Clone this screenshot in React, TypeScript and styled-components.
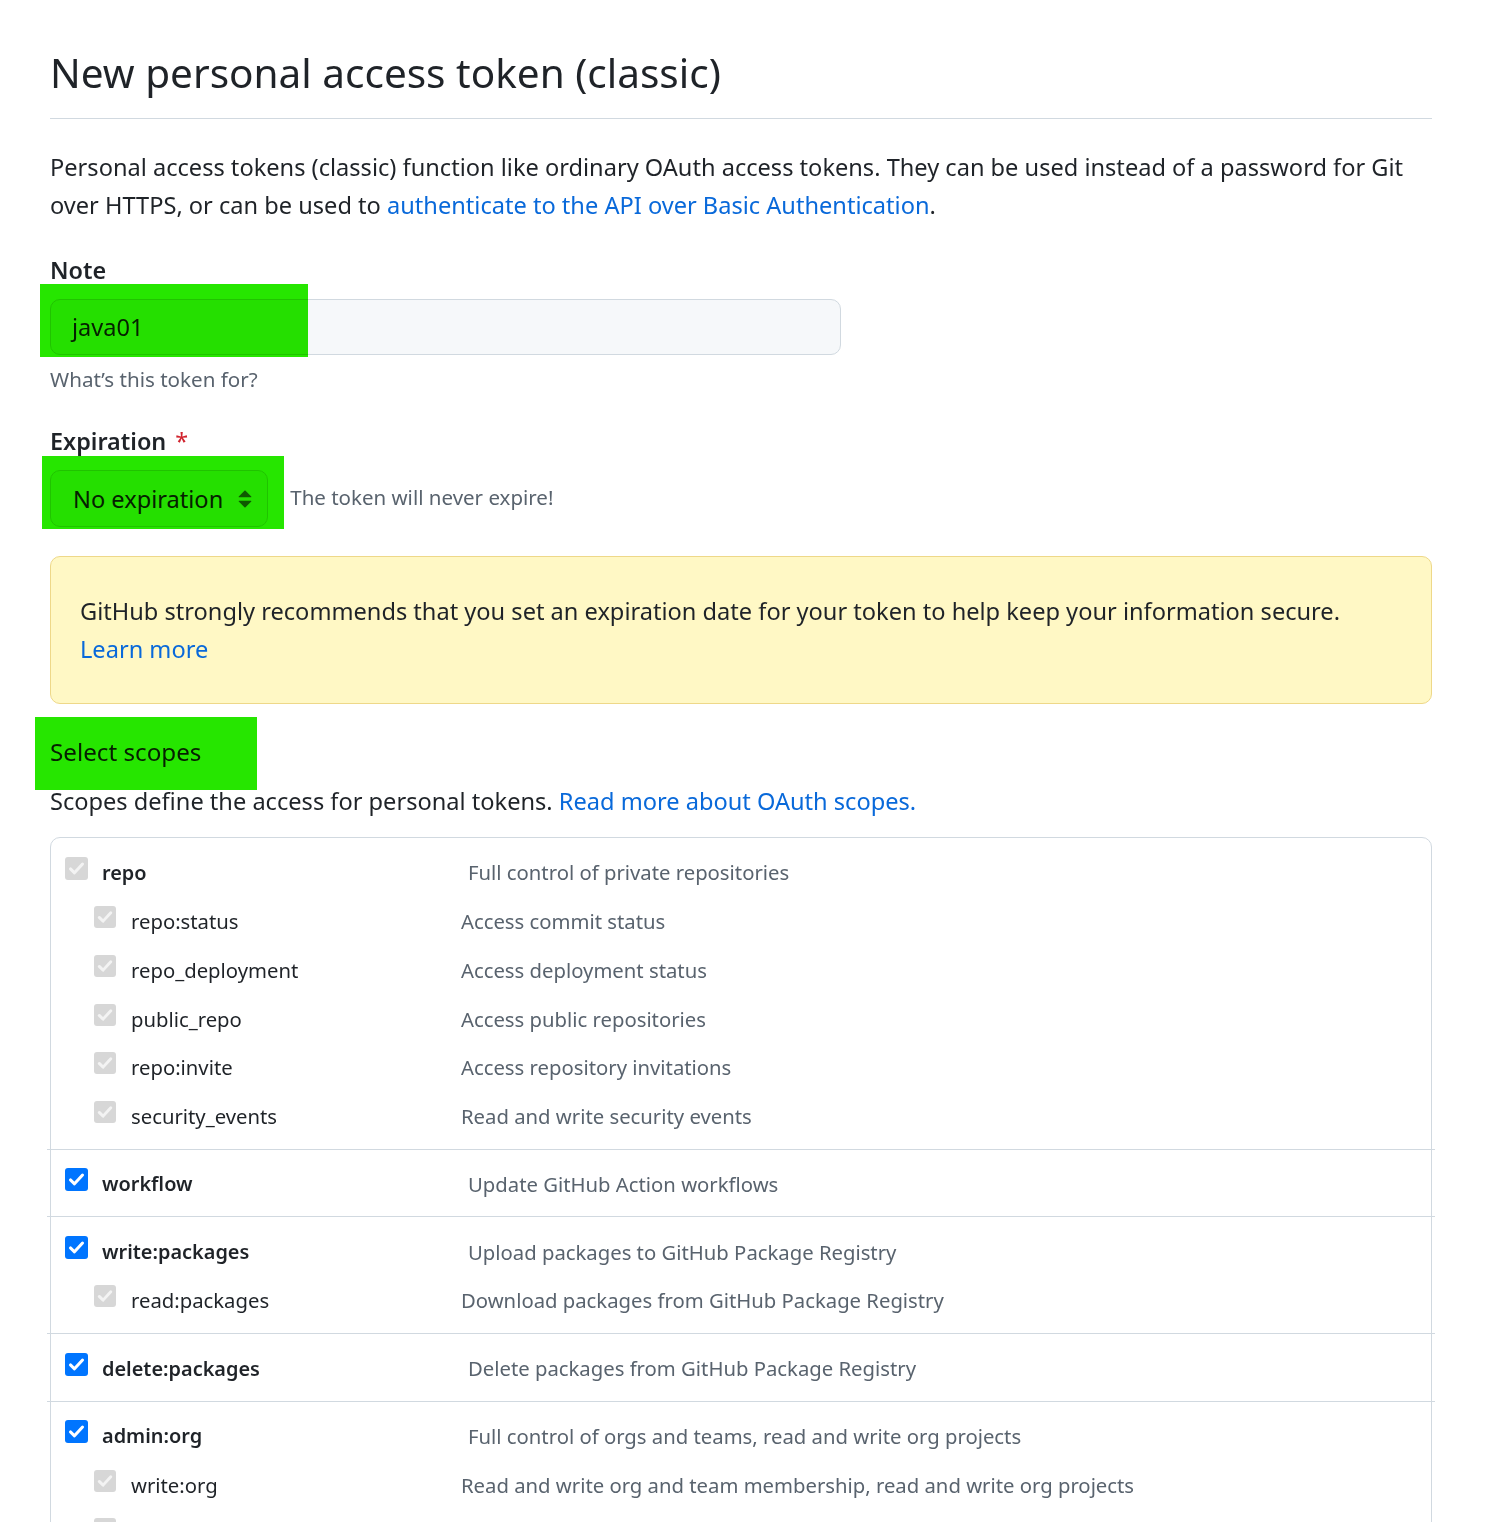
import React from "react";
import styled, { createGlobalStyle } from "styled-components";

const GlobalStyle = createGlobalStyle`
  html, body { margin: 0; padding: 0; background: #ffffff; }
  body {
    font-family: "Noto Sans", "Open Sans", sans-serif;
    color: #1f2328;
    -webkit-font-smoothing: antialiased;
  }
  * { box-sizing: border-box; }
`;

const Page = styled.main`
  box-sizing: content-box;
  width: 1382px;
  padding: 47px 60px 0 50px;
`;

const Title = styled.h1`
  margin: 0;
  padding-bottom: 19px;
  border-bottom: 1px solid #d1d9e0;
  font-size: 40.5px;
  line-height: 52px;
  font-weight: 400;
  color: #1f2328;
`;

const Intro = styled.p`
  margin: 29px 0 0;
  font-size: 23.6px;
  line-height: 38px;
`;

const Link = styled.a`
  color: #0969da;
  text-decoration: none;
`;

const Label = styled.div<{ $top?: number }>`
  margin-top: ${(p) => p.$top ?? 28}px;
  font-size: 23.4px;
  line-height: 36px;
  font-weight: 600;
  display: flex;
  gap: 9px;
`;

const Required = styled.span`
  color: #d1242f;
  font-weight: 400;
`;

const Marked = styled.div`
  position: relative;
  display: inline-flex;
`;

const Highlight = styled.span<{ $l: number; $t: number; $w: number; $h: number }>`
  position: absolute;
  left: ${(p) => p.$l}px;
  top: ${(p) => p.$t}px;
  width: ${(p) => p.$w}px;
  height: ${(p) => p.$h}px;
  background: rgb(38, 230, 0);
  mix-blend-mode: multiply;
  pointer-events: none;
`;

const InputRow = styled.div`
  margin-top: 11px;
`;

const TextInput = styled.div`
  width: 791px;
  height: 56px;
  padding-left: 21px;
  display: flex;
  align-items: center;
  background: #f6f8fa;
  border: 1px solid #d1d9e0;
  border-radius: 10px;
  font-size: 23.6px;
  color: #1f2328;
`;

const Hint = styled.div`
  margin-top: 8px;
  font-size: 20.6px;
  line-height: 32px;
  color: #59636e;
`;

const SelectRow = styled.div`
  margin-top: 11px;
  display: flex;
  align-items: center;
  gap: 22px;
`;

const Select = styled.div`
  height: 57px;
  padding: 0 44px 0 22px;
  display: flex;
  align-items: center;
  position: relative;
  background: #f6f8fa;
  border: 1px solid #d1d9e0;
  border-radius: 10px;
  font-size: 23.6px;
  color: #1f2328;
`;

const SelectArrow = styled.svg`
  position: absolute;
  right: 8px;
  top: 50%;
  margin-top: -14px;
  width: 28px;
  height: 28px;
`;

const SideNote = styled.span`
  font-size: 20.5px;
  color: #59636e;
  margin-top: -3px;
`;

const Flash = styled.div`
  margin-top: 29px;
  padding: 35px 29px;
  background: #fff8c5;
  border: 1px solid #eed889;
  border-radius: 10px;
  font-size: 23.6px;
  line-height: 38px;
`;

const SectionTitle = styled.div`
  margin-top: 30px;
  font-size: 24.2px;
  line-height: 36px;
`;

const SectionText = styled.p`
  margin: 13px 0 0;
  font-size: 23.6px;
  line-height: 36px;
`;

const ScopeBox = styled.div`
  margin-top: 18px;
  border: 1px solid #d1d9e0;
  border-radius: 10px;
  padding-bottom: 40px;
`;

const Group = styled.div<{ $first: boolean }>`
  margin: 0 -4px;
  padding: 9px 4px;
  border-top: ${(p) => (p.$first ? "none" : "1px solid #d1d9e0")};
`;

const Row = styled.div<{ $child: boolean }>`
  height: 48.75px;
  display: flex;
  align-items: center;
  padding-left: ${(p) => (p.$child ? 43 : 14)}px;
  padding-top: 2px;
  font-size: 20.3px;
`;

const Box = styled.span<{ $size: number; $on: boolean; $gap: number }>`
  flex: none;
  width: ${(p) => p.$size}px;
  height: ${(p) => p.$size}px;
  margin: 0 ${(p) => p.$gap}px 8px 0;
  border-radius: 3px;
  background: ${(p) => (p.$on ? "#0075ff" : "#d7d7d7")};
  display: inline-flex;
  align-items: center;
  justify-content: center;
`;

const ScopeName = styled.span<{ $child: boolean }>`
  flex: none;
  width: ${(p) => (p.$child ? 330 : 366)}px;
  font-size: ${(p) => (p.$child ? 20.3 : 19.9)}px;
  font-weight: ${(p) => (p.$child ? 400 : 600)};
  color: #1f2328;
`;

const ScopeDesc = styled.span`
  color: #59636e;
`;

type Scope = { name: string; desc: string };
type ScopeGroup = { parent: Scope; on: boolean; children: Scope[] };

const groups: ScopeGroup[] = [
  {
    parent: { name: "repo", desc: "Full control of private repositories" },
    on: false,
    children: [
      { name: "repo:status", desc: "Access commit status" },
      { name: "repo_deployment", desc: "Access deployment status" },
      { name: "public_repo", desc: "Access public repositories" },
      { name: "repo:invite", desc: "Access repository invitations" },
      { name: "security_events", desc: "Read and write security events" },
    ],
  },
  {
    parent: { name: "workflow", desc: "Update GitHub Action workflows" },
    on: true,
    children: [],
  },
  {
    parent: { name: "write:packages", desc: "Upload packages to GitHub Package Registry" },
    on: true,
    children: [{ name: "read:packages", desc: "Download packages from GitHub Package Registry" }],
  },
  {
    parent: { name: "delete:packages", desc: "Delete packages from GitHub Package Registry" },
    on: true,
    children: [],
  },
  {
    parent: { name: "admin:org", desc: "Full control of orgs and teams, read and write org projects" },
    on: true,
    children: [
      { name: "write:org", desc: "Read and write org and team membership, read and write org projects" },
      { name: "read:org", desc: "Read org and team membership, read org projects" },
      { name: "manage_runners:org", desc: "Manage org runners and runner groups" },
    ],
  },
];

function Check({ size, on, gap }: { size: number; on: boolean; gap: number }) {
  return (
    <Box $size={size} $on={on} $gap={gap}>
      <svg width={size} height={size} viewBox="0 0 16 16">
        <path
          d="M3.8 8.3 L6.6 11 L12.2 4.9"
          fill="none"
          stroke={on ? "#ffffff" : "#f3f3f3"}
          strokeWidth="2.1"
          strokeLinecap="round"
          strokeLinejoin="round"
        />
      </svg>
    </Box>
  );
}

export default function App() {
  return (
    <>
      <GlobalStyle />
      <Page>
        <Title>New personal access token (classic)</Title>
        <Intro>
          Personal access tokens (classic) function like ordinary OAuth access tokens. They can be used instead of a
          password for Git
          <br />
          over HTTPS, or can be used to <Link href="#">authenticate to the API over Basic Authentication</Link>.
        </Intro>

        <Label>Note</Label>
        <InputRow>
          <Marked>
            <TextInput>java01</TextInput>
            <Highlight $l={-10} $t={-15} $w={268} $h={73} />
          </Marked>
        </InputRow>
        <Hint>What’s this token for?</Hint>

        <Label>
          Expiration <Required>*</Required>
        </Label>
        <SelectRow>
          <Marked>
            <Select>
              No expiration
              <SelectArrow viewBox="0 0 16 16" fill="#59636e">
                <path d="M4.427 9.427l3.396 3.396a.25.25 0 00.354 0l3.396-3.396A.25.25 0 0011.396 9H4.604a.25.25 0 00-.177.427zM4.427 6.573l3.396-3.396a.25.25 0 01.354 0l3.396 3.396A.25.25 0 0111.396 7H4.604a.25.25 0 01-.177-.427z" />
              </SelectArrow>
            </Select>
            <Highlight $l={-8} $t={-14} $w={242} $h={73} />
          </Marked>
          <SideNote>The token will never expire!</SideNote>
        </SelectRow>

        <Flash>
          GitHub strongly recommends that you set an expiration date for your token to help keep your information
          secure.
          <br />
          <Link href="#">Learn more</Link>
        </Flash>

        <SectionTitle>
          <Marked>
            Select scopes
            <Highlight $l={-15} $t={-17} $w={222} $h={73} />
          </Marked>
        </SectionTitle>
        <SectionText>
          Scopes define the access for personal tokens. <Link href="#">Read more about OAuth scopes.</Link>
        </SectionText>

        <ScopeBox>
          {groups.map((g, i) => (
            <Group key={g.parent.name} $first={i === 0}>
              <Row $child={false}>
                <Check size={23} on={g.on} gap={14} />
                <ScopeName $child={false}>{g.parent.name}</ScopeName>
                <ScopeDesc>{g.parent.desc}</ScopeDesc>
              </Row>
              {g.children.map((c) => (
                <Row key={c.name} $child>
                  <Check size={22} on={false} gap={15} />
                  <ScopeName $child>{c.name}</ScopeName>
                  <ScopeDesc>{c.desc}</ScopeDesc>
                </Row>
              ))}
            </Group>
          ))}
        </ScopeBox>
      </Page>
    </>
  );
}
